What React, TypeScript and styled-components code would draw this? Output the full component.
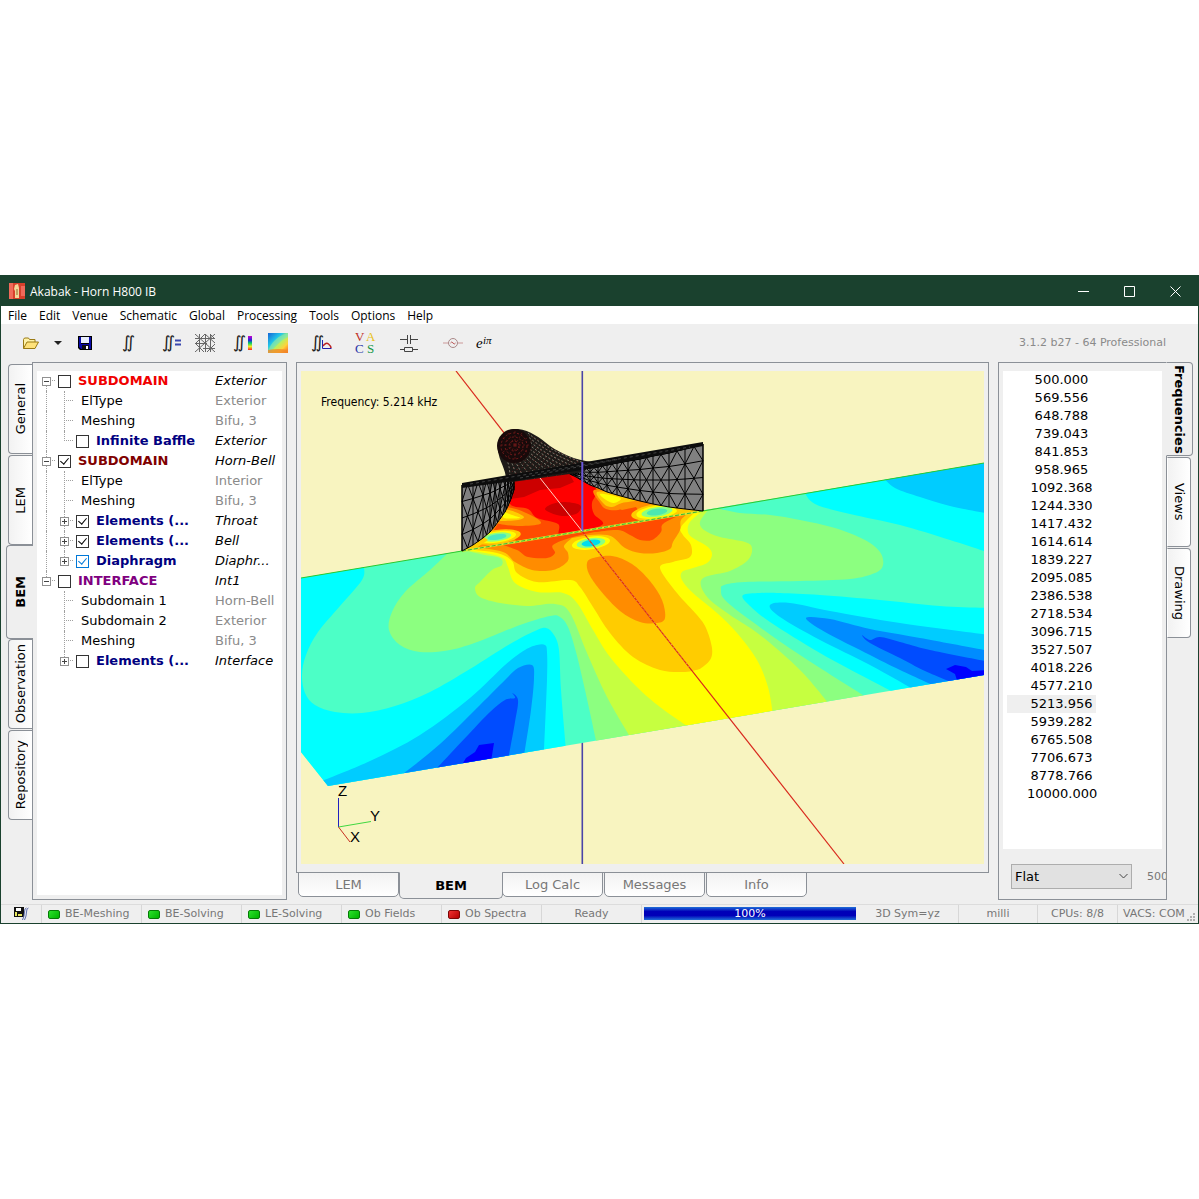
import React, { useState } from "react";
import styled, { createGlobalStyle, css } from "styled-components";

const verdana = `Verdana, "DejaVu Sans", sans-serif`;
const segoe = `"Segoe UI", "Open Sans", "Noto Sans", sans-serif`;
const line = "#8b9097";
const face = "#efefef";

const GlobalStyle = createGlobalStyle`
  *, *::before, *::after { box-sizing: border-box; }
  body { margin: 0; background: #fff; font-family: ${verdana}; font-size: 13px; color: #000; }
  button, select, input { font: inherit; color: inherit; margin: 0; }
  ul { list-style: none; margin: 0; padding: 0; }
`;

const Page = styled.div`
  min-height: 100vh;
  display: flex;
  flex-direction: column;
  justify-content: center;
`;

const Window = styled.main`
  display: flex;
  flex-direction: column;
  border: 1px solid #1a412e;
  background: ${face};
`;

const TitleBar = styled.header`
  display: flex;
  align-items: center;
  height: 30px;
  padding-left: 8px;
  background: #1a412e;
  color: #fff;
  font-family: ${segoe};
`;

const Title = styled.h1`
  margin: 0 auto 0 5px;
  font-size: 12px;
  font-weight: 400;
`;

const CaptionButton = styled.button`
  display: grid;
  place-items: center;
  width: 46px;
  height: 30px;
  padding: 0;
  border: 0;
  background: none;
`;

const MenuBar = styled.nav`
  display: flex;
  height: 18px;
  padding-left: 1px;
  background: #fff;
`;

const MenuItem = styled.button`
  padding: 0 6px;
  border: 0;
  background: none;
  font-family: ${segoe};
  font-size: 12px;
  line-height: 20px;
`;

const ToolBar = styled.div`
  display: flex;
  align-items: center;
  height: 38px;
  padding: 0 32px 1px 18px;
`;

const ToolButton = styled.button<{ $w?: number; $after?: number }>`
  display: grid;
  place-items: center;
  width: ${(p) => p.$w ?? 32}px;
  height: 28px;
  margin-right: ${(p) => p.$after ?? 0}px;
  padding: 0;
  border: 0;
  background: none;
`;

const Version = styled.span`
  margin-left: auto;
  color: #8a8a8a;
  font-size: 11px;
`;

const Workspace = styled.div`
  display: grid;
  grid-template-columns: 25px 255px minmax(0, 1fr) 169px 25px;
  padding: 0 6px 4px 6px;
`;

const SideTabs = styled.div<{ $right?: boolean }>`
  display: flex;
  flex-direction: column;
  gap: 1px;
  padding-top: ${(p) => (p.$right ? 0 : 2)}px;
  ${(p) => !p.$right && css`align-items: flex-end;`}
`;

const SideTab = styled.button<{ $right?: boolean; $active?: boolean }>`
  position: relative;
  z-index: 1;
  display: grid;
  place-items: center;
  width: 24px;
  height: ${(p) => (p.$active ? 94 : 90)}px;
  padding: 0;
  border: 1px solid ${line};
  background: linear-gradient(to right, #f2f2f2, #fff);
  span {
    writing-mode: vertical-rl;
    white-space: nowrap;
  }
  ${(p) =>
    p.$right
      ? css`
          border-left-color: transparent;
          border-radius: 0 4px 4px 0;
        `
      : css`
          border-right: 0;
          border-radius: 4px 0 0 4px;
          span { transform: rotate(180deg); }
        `}
  ${(p) =>
    p.$active &&
    css`
      width: 27px;
      margin: ${p.$right ? "0 0 0 -1px" : "-1px -1px -1px 0"};
      background: ${face};
      font-weight: 700;
    `}
`;

const Panel = styled.section`
  display: flex;
  flex-direction: column;
  border: 1px solid ${line};
  background: ${face};
`;

const Sheet = styled.div`
  flex: 1;
  margin: 8px 4px 4px;
  background: #fff;
`;

const TreeRow = styled.li`
  display: grid;
  grid-template-columns: 178px minmax(0, 1fr);
  height: 20px;
  line-height: 20px;
`;

const TreeName = styled.div`
  display: flex;
  align-items: center;
`;

const Guide = styled.span<{ $up?: boolean; $down?: boolean; $stub?: boolean }>`
  position: relative;
  flex: none;
  display: grid;
  place-items: center;
  width: 18px;
  height: 20px;
  &::before {
    content: "";
    position: absolute;
    left: 9px;
    top: ${(p) => (p.$up ? 0 : 10)}px;
    bottom: ${(p) => (p.$down ? 0 : 10)}px;
    border-left: 1px dotted #a0a0a0;
  }
  &::after {
    content: "";
    position: absolute;
    left: 9px;
    right: 0;
    top: 9px;
    border-top: ${(p) => (p.$stub ? "1px dotted #a0a0a0" : 0)};
  }
`;

const Expander = styled.button`
  position: relative;
  z-index: 1;
  display: block;
  width: 9px;
  height: 9px;
  padding: 0;
  border: 1px solid #919191;
  background: #fff;
  svg { display: block; }
`;

const Check = styled.input`
  appearance: none;
  flex: none;
  position: relative;
  width: 13px;
  height: 13px;
  margin: 0 7px 0 3px;
  border: 1px solid #333;
  background: #fff;
  &[data-hot="true"] { border-color: #0078d7; color: #0078d7; }
  &:checked::after {
    content: "";
    position: absolute;
    left: 3px;
    top: 0;
    width: 5px;
    height: 8px;
    border: solid currentColor;
    border-width: 0 1px 1px 0;
    transform: rotate(40deg);
  }
`;

const NodeLabel = styled.label<{ $color?: string }>`
  color: ${(p) => p.$color ?? "#000"};
  font-weight: 700;
  white-space: nowrap;
`;

const NodeText = styled.span`
  padding-left: 8px;
`;

const TreeValue = styled.span<{ $dim?: boolean }>`
  overflow: hidden;
  white-space: nowrap;
  text-overflow: ellipsis;
  color: ${(p) => (p.$dim ? "#8a8a8a" : "#000")};
  font-style: ${(p) => (p.$dim ? "normal" : "italic")};
`;

const Center = styled.div`
  display: flex;
  flex-direction: column;
  margin: 0 9px 1px;
`;

const View = styled(Panel)`
  padding: 8px 4px;
  svg { display: block; width: 100%; height: auto; }
`;

const BottomTabs = styled.div`
  display: flex;
  align-items: flex-start;
  gap: 1px;
  padding-left: 2px;
`;

const BottomTab = styled.button<{ $active?: boolean }>`
  position: relative;
  z-index: 1;
  width: 101px;
  height: 25px;
  margin-top: -1px;
  padding: 0 0 1px;
  border: 1px solid ${line};
  border-radius: 0 0 5px 5px;
  background: linear-gradient(#f2f2f2, #fff);
  color: #777;
  ${(p) =>
    p.$active &&
    css`
      width: 104px;
      height: 27px;
      margin-left: -1px;
      margin-right: -2px;
      border-top-color: ${face};
      background: ${face};
      color: #000;
      font-weight: 700;
    `}
`;

const FreqItem = styled.li`
  width: 89px;
  height: 18px;
  margin-left: 4px;
  padding-left: 20px;
  line-height: 18px;
  text-align: center;
  white-space: nowrap;
  cursor: default;
  &[aria-selected="true"] { background: ${face}; }
`;

const PanelFooter = styled.div`
  display: flex;
  align-items: center;
  gap: 15px;
  height: 46px;
  padding-left: 12px;
  overflow: hidden;
  color: #777;
  font-size: 11px;
`;

const SelectBox = styled.div`
  position: relative;
  flex: none;
  width: 121px;
  svg {
    position: absolute;
    right: 4px;
    top: 9px;
    pointer-events: none;
  }
`;

const Select = styled.select`
  appearance: none;
  width: 100%;
  height: 25px;
  padding: 0 3px;
  border: 1px solid #adadad;
  border-radius: 0;
  background: #e1e1e1;
  color: #000;
  font-size: 13px;
`;

const StatusBar = styled.footer`
  display: flex;
  height: 19px;
  border-top: 1px solid #dcdcdc;
  color: #777;
  font-size: 11px;
  line-height: 18px;
  overflow: hidden;
`;

const StatusCell = styled.div<{ $w: number; $start?: boolean }>`
  flex: none;
  display: flex;
  align-items: center;
  justify-content: ${(p) => (p.$start ? "flex-start" : "center")};
  gap: 5px;
  width: ${(p) => p.$w}px;
  padding-left: ${(p) => (p.$start ? 6 : 0)}px;
  border-right: 1px solid #d7d7d7;
  white-space: nowrap;
`;

const Lamp = styled.i<{ $on: boolean }>`
  width: 12px;
  height: 9px;
  border: 1px solid ${(p) => (p.$on ? "#067a06" : "#7a0606")};
  border-radius: 2px;
  background: ${(p) =>
    p.$on ? "linear-gradient(135deg, #2be02b, #00b400)" : "linear-gradient(135deg, #f03030, #b40000)"};
`;

const Progress = styled.div`
  flex: 1;
  height: 13px;
  margin: 2px 1px 0 2px;
  background: linear-gradient(#1f6fd8, #0000b8 35%, #0000b8 65%, #1f6fd8);
  color: #fff;
  line-height: 13px;
  text-align: center;
`;

const LastCell = styled.div`
  flex: none;
  display: flex;
  width: 80px;
  padding-left: 5px;
  white-space: nowrap;
  svg { margin: 8px 3px 0 auto; }
`;

/* ---------- Toolbar drawings ---------- */

const Integrals = ({ x = 2 }: { x?: number }) => (
  <text x={x} y="16" fontFamily="DejaVu Sans, sans-serif" fontSize="17" fill="#222">∬</text>
);

const FolderIcon = () => (
  <svg width="18" height="14" viewBox="0 0 18 14">
    <path d="M1.5 12.5V3.5l1-1.5h4l1 1.500h5.500v2.500" fill="#fff3a8" stroke="#9a7a14" />
    <path d="M1.500 12.500 5 6h11.500L13 12.500z" fill="#ffe27a" stroke="#9a7a14" />
  </svg>
);

const SaveIcon = () => (
  <svg width="14" height="14" viewBox="0 0 14 14">
    <path d="M0 0h14v14H2l-2-2z" fill="#000" />
    <path d="M1 1h2v7h8V1h2v12H3l-2-2z" fill="#0a0aa8" />
    <path d="M3 1h8v6H3z" fill="#e8eefc" />
    <path d="M4 9h7v4H4z" fill="#111" />
    <path d="M8 10h2v3H8z" fill="#fff" />
  </svg>
);

const MeshIcon = () => (
  <svg width="20" height="18" viewBox="0 0 20 18" fill="none" stroke="#666">
    <path d="M0 4.500h20M0 9.500h12M8 14.500h12M4.500 0v18M10.500 0v18M15.500 0v18M0 0l20 18M20 0 0 18M0 10l10-10 10 9M0 9l9 9M12 18l8-8M15 0l5 5" />
  </svg>
);

const FieldIcon = () => (
  <svg width="20" height="20" viewBox="0 0 20 20">
    <defs>
      <linearGradient id="fi" x1="0" y1="0" x2="1" y2="1">
        <stop offset="0" stopColor="#1565d8" />
        <stop offset=".35" stopColor="#22c8e8" />
        <stop offset=".55" stopColor="#b8f060" />
        <stop offset=".75" stopColor="#ffd23a" />
        <stop offset="1" stopColor="#ff5a1e" />
      </linearGradient>
    </defs>
    <path d="M0 0h20v20H0z" fill="url(#fi)" />
    <path d="M0 20C2 10 9 3 20 0V4C12 8 5 14 3 20z" fill="#7fe6b0" opacity=".7" />
    <path d="M0 17q10-2 20 0v3H0z" fill="#f08a28" opacity=".8" />
  </svg>
);

const SourceIcon = () => (
  <svg width="20" height="12" viewBox="0 0 20 12" fill="none" stroke="#c99">
    <path d="M0 6h5M15 6h5" />
    <circle cx="10" cy="6" r="4.500" stroke="#a88" />
    <path d="M7.500 6q1.200-2 2.500 0t2.500 0" stroke="#b55" />
  </svg>
);

const CapIcon = () => (
  <svg width="18" height="18" viewBox="0 0 18 18" fill="none" stroke="#444">
    <path d="M0 5.500h7M11 5.500h7M7.500 1v9M10.500 1v9M0 15.500h4M13 15.500h5M4.500 13.500h8v4h-8z" />
  </svg>
);

/* ---------- Tree ---------- */

type Node = {
  name: string;
  value: string;
  root?: boolean;
  check?: boolean;
  checked?: boolean;
  expand?: "+" | "-";
  color?: string;
  last?: boolean;
  hot?: boolean;
  tail?: boolean;
};

const navy = "#000080";
const nodes: Node[] = [
  { name: "SUBDOMAIN", value: "Exterior", root: true, check: true, expand: "-", color: "#f00000" },
  { name: "ElType", value: "Exterior" },
  { name: "Meshing", value: "Bifu, 3" },
  { name: "Infinite Baffle", value: "Exterior", check: true, color: navy, last: true },
  { name: "SUBDOMAIN", value: "Horn-Bell", root: true, check: true, checked: true, expand: "-", color: "#800000" },
  { name: "ElType", value: "Interior" },
  { name: "Meshing", value: "Bifu, 3" },
  { name: "Elements (...", value: "Throat", check: true, checked: true, expand: "+", color: navy },
  { name: "Elements (...", value: "Bell", check: true, checked: true, expand: "+", color: navy },
  { name: "Diaphragm", value: "Diaphr...", check: true, checked: true, expand: "+", color: navy, last: true, hot: true },
  { name: "INTERFACE", value: "Int1", root: true, check: true, expand: "-", color: "#800080", tail: true },
  { name: "Subdomain 1", value: "Horn-Bell", tail: true },
  { name: "Subdomain 2", value: "Exterior", tail: true },
  { name: "Meshing", value: "Bifu, 3", tail: true },
  { name: "Elements (...", value: "Interface", check: true, expand: "+", color: navy, last: true, tail: true },
];

const ExpanderBox = ({ sign, name }: { sign: "+" | "-"; name: string }) => (
  <Expander type="button" aria-label={(sign === "+" ? "Expand " : "Collapse ") + name}>
    <svg width="7" height="7" viewBox="0 0 7 7" stroke="#444">
      <path d={sign === "+" ? "M1 3.500h5M3.500 1v5" : "M1 3.500h5"} />
    </svg>
  </Expander>
);

const Indent = styled.span`
  flex: none;
  width: 18px;
`;

const TreeItem = ({ node, id, first }: { node: Node; id: string; first: boolean }) => (
  <TreeRow>
    <TreeName>
      {node.root ? (
        <Guide $up={!first} $down={!node.tail} $stub>
          <ExpanderBox sign={node.expand!} name={node.name} />
        </Guide>
      ) : (
        <>
          {node.tail ? <Indent /> : <Guide $up $down />}
          <Guide $up $down={!node.last} $stub>
            {node.expand && <ExpanderBox sign={node.expand} name={node.name} />}
          </Guide>
        </>
      )}
      {node.check ? (
        <>
          <Check type="checkbox" id={id} defaultChecked={node.checked} data-hot={!!node.hot} />
          <NodeLabel htmlFor={id} $color={node.color}>{node.name}</NodeLabel>
        </>
      ) : (
        <NodeText>{node.name}</NodeText>
      )}
    </TreeName>
    <TreeValue $dim={!node.check}>{node.value}</TreeValue>
  </TreeRow>
);

/* ---------- Sound field ---------- */

type Pt = [number, number];

/* Smooth curve through the points; the flat ends are kept outside of the clip. */
const smooth = (pts: Pt[], closed = false) => {
  const n = pts.length;
  const at = (i: number) => (closed ? pts[(i + n) % n] : pts[Math.max(0, Math.min(n - 1, i))]);
  let d = `M${pts[0][0]} ${pts[0][1]}`;
  for (let i = 0; i < (closed ? n : n - 1); i++) {
    const [a, b, c, e] = [at(i - 1), at(i), at(i + 1), at(i + 2)];
    d += `C${b[0] + (c[0] - a[0]) / 6} ${b[1] + (c[1] - a[1]) / 6} ${c[0] - (e[0] - b[0]) / 6} ${c[1] - (e[1] - b[1]) / 6} ${c[0]} ${c[1]}`;
  }
  return d;
};

const parse = (s: string): Pt[] => s.trim().split(/\s+/).map((p) => p.split(",").map(Number) as Pt);

/* Each band: colour, contour points, straight closing path. */
const bands: [string, string, string][] = [
  ["#00ffff", "364,567 362,580 340,606 318,632 306,655 302,675 305,693 315,705 335,712 362,713 395,706 430,692 470,669 510,644 535,631 546,628 554,635 559,650 561,690 566,750", "L566 800L290 800L290 560Z"],
  ["#00ccff", "322,781 370,761 420,735 470,698 505,665 525,650 537,645 545,645 547,652 547,680 544,752", "L544 800L328 800Z"],
  ["#008cff", "403,774 440,744 480,705 505,680 518,668 532,665 534,678 531,710 524,756", "L524 800L400 800Z"],
  ["#004cff", "436,769 468,735 490,712 505,700 515,698 512,693 518,700 515,722 508,760", "L508 800L430 800Z"],
  ["#00ffff", "803,490 815,504 850,514 900,525 950,540 990,553", "L990 440L803 440Z"],
  ["#00ccff", "882,476 895,488 920,497 950,506 990,514", "L990 440Z"],
  ["#00ffff", "990,608 940,606 880,600 820,595 780,593 760,593 743,595 748,604 770,622 820,653 870,680 905,698", "L990 700Z"],
  ["#00ccff", "990,635 900,623 830,611 790,603 770,605 780,617 820,640 870,665 920,693", "L990 700Z"],
  ["#008cff", "990,651 920,638 870,629 830,619 806,618 825,632 870,655 900,670 948,692", "L990 700Z"],
  ["#004cff", "990,662 930,650 900,642 880,637 870,640 862,635 870,643 900,658 925,671 965,688", "L990 700Z"],
  ["#8cff80", "449,552 430,570 405,592 392,612 389,630 400,645 420,652 450,650 480,641 520,625 550,616 560,617 568,627 576,652 585,690 597,745", "L600 800L880 800L866 697"],
];

const greenRight = "866,697 800,655 750,620 725,600 721,590 724,585 745,582 800,581 850,579 875,573 883,565 880,552 865,540 835,528 800,520 770,515 740,513 716,508";

const nested: [string, string, string][] = [
  ["#c6ff40",
    "462,550 485,555 500,558 502,565 492,570 480,582 475,588 480,597 500,603 527,606 555,604 570,613 587,653 607,697 632,740",
    "830,705 800,670 760,635 730,615 710,600 701,586 705,577 730,571 748,560 752,548 745,542 720,537 704,530 700,522 708,510"],
  ["#ffff00",
    "462,550 485,553 503,558 508,567 515,583 537,592 563,593 577,603 593,630 610,657 637,687 660,707 690,728",
    "773,715 768,687 757,660 737,633 717,613 693,593 682,580 682,572 693,568 707,563 712,555 708,547 693,538 688,532 690,522 704,510"],
  ["#ffcc00",
    "464,549 497,553 512,561 517,573 537,582 570,580 580,587 593,607 610,633 633,657 660,670 685,672 700,669",
    "700,669 710,660 712,648 706,628 697,615 677,593 660,568 673,562 690,557 691,545 683,535 681,527 696,511"],
  ["#ff8c00",
    "474,547 503,552 515,562 532,570 553,570 567,562 568,553 564,546 572,538",
    "572,538 595,535 612,537 625,548 640,553 657,553 670,549 673,542 680,530 681,520 690,512"],
  ["#ff4c00",
    "500,544 517,550 528,557 547,558 555,553 553,545 573,537 595,532",
    "595,532 618,530 630,535 640,540 652,540 661,532 663,524 680,515"],
];

const hornFloor = "M462 551L470 500L513 476L566 470L703 480V511Z";

const floorSpots: [string, string][] = [
  ["#ff8c00", "500,508 516,509 536,518 540,524 520,526 500,524 492,520"],
  ["#ffcc00", "503,510 515,512 524,517 518,520 502,521 494,520"],
  ["#ffff00", "503,512 512,515 520,518 504,518"],
  ["#ff8c00", "594,490 620,492 652,502 650,507 630,505 618,510 606,509 600,503"],
  ["#ffcc00", "597,492 620,494 636,500 622,503 612,507 604,504"],
  ["#ffff00", "600,494 614,496 621,499 614,503 606,500"],
];

const Spot = ({ x, y, rx, ry, colors }: { x: number; y: number; rx: number; ry: number; colors: string[] }) => (
  <g transform={`rotate(-8 ${x} ${y})`}>
    {colors.map((c, i) => {
      const k = 1 - i / (colors.length + 1);
      return <ellipse key={c} cx={x} cy={y} rx={rx * k} ry={ry * k} fill={c} />;
    })}
  </g>
);

/* Triangulated wall between a top and a bottom edge. */
const wallMesh = (cols: [number, number, number][], rows: number) => {
  let d = "";
  const y = (c: [number, number, number], r: number) => c[1] + ((c[2] - c[1]) * r) / rows;
  cols.forEach((c, i) => {
    d += `M${c[0]} ${c[1]}V${c[2]}`;
    const n = cols[i + 1];
    if (!n) return;
    for (let r = 0; r < rows; r++) {
      const m: [number, number, number] = [(c[0] + n[0]) / 2, (c[1] + n[1]) / 2, (c[2] + n[2]) / 2];
      d += `M${c[0]} ${y(c, r)}L${n[0]} ${y(n, r)}`;
      d += r % 2
        ? `M${c[0]} ${y(c, r)}L${m[0]} ${y(m, r + 1)}L${n[0]} ${y(n, r)}`
        : `M${c[0]} ${y(c, r + 1)}L${m[0]} ${y(m, r)}L${n[0]} ${y(n, r + 1)}`;
    }
  });
  return d;
};

const rightWall: [number, number, number][] = [
  [703, 444, 511], [685, 449, 509], [669, 453, 507], [653, 456, 504], [640, 459, 501], [628, 461, 498],
  [617, 463, 495], [607, 465, 492], [598, 467, 488], [590, 468, 485], [583, 469, 481], [576, 470, 477], [568, 471, 473],
];
const leftWall: [number, number, number][] = [
  [462, 485, 551], [473, 483, 545], [483, 481, 538], [490, 480, 532], [495, 479, 526], [500, 478, 519],
  [505, 477, 512], [508, 477, 506], [511, 476, 499], [514, 476, 490],
];
const outline = (cols: [number, number, number][]) =>
  "M" + cols.map((c) => `${c[0]} ${c[1]}`).join("L") + "L" + [...cols].reverse().map((c) => `${c[0]} ${c[2]}`).join("L") + "Z";

const neck = "M498 450C497 434 508 428 518 429C530 430 540 438 550 446C562 454 575 460 592 462L584 472L512 482L506 482C507 470 499 462 498 450Z";

const neckRibs = Array.from({ length: 13 }, (_, i) => {
  const t = i / 12;
  return `M${528 - 22 * t} ${433 + 26 * t}Q${550 - 40 * t} ${452 + 12 * t} ${590 - 80 * t} ${465 + 15 * t}`;
}).join("");
const neckRings = Array.from({ length: 14 }, (_, i) => {
  const x = 530 + i * 4;
  return `M${x} ${435 + i * 2.2}Q${x - 14} ${456 + i} ${x - 20} 480`;
}).join("");
const throatWeb = Array.from({ length: 12 }, (_, i) => {
  const a = (i * Math.PI) / 6;
  return `M515 445L${515 + 16 * Math.cos(a)} ${445 + 16 * Math.sin(a)}`;
}).join("");

const SoundField = () => (
  <svg viewBox="301 371 683 493" role="img" aria-label="Sound field of the horn">
    <defs>
      <clipPath id="plane"><path d="M301 578L984 463V675L328 786L301 752Z" /></clipPath>
      <clipPath id="floor"><path d={hornFloor} /></clipPath>
      <clipPath id="neckClip"><path d={neck} /></clipPath>
    </defs>
    <path d="M301 371h683v493H301z" fill="#f8f4c0" />
    <path d="M456 371L515 447" stroke="#d8281c" strokeWidth="1.200" />
    <path d="M582.300 371V864" stroke="#4a44a8" strokeWidth="1.600" />

    <g clipPath="url(#plane)">
      <path d="M301 460h683v330H301z" fill="#4cffc6" />
      {bands.slice(0, 10).map(([c, p, end], i) => <path key={i} d={smooth(parse(p)) + end} fill={c} />)}
      <path d="M460 768L466 758L475 752L479 745L494 743L490 768Z" fill="#0000ff" />
      <path d="M946 669L955 665L966 667L972 671L990 670V690H960L955 674Z" fill="#0000ff" />
      <path d={smooth(parse(bands[10][1])) + bands[10][2] + smooth(parse(greenRight)).replace("M", "L") + "Z"} fill={bands[10][0]} />
      {nested.map(([c, a, b]) => (
        <path key={c} d={smooth(parse(a)) + smooth(parse(b)).replace("M", "L") + "Z"} fill={c} />
      ))}
      <path
        d={smooth(parse("587,563 593,558 612,556 632,564 650,581 662,600 665,618 657,623 640,622 620,611 600,590 589,574"), true)}
        fill="#ff8c00"
      />
      <Spot x={591} y={543} rx={24} ry={8} colors={["#ffcc00", "#ffff00", "#8cff80", "#00ddee"]} />
    </g>

    <g clipPath="url(#floor)">
      <path d="M460 470h245v85H460z" fill="#ff8c00" />
      <path d="M500 520L512 500L560 478L600 490L604 503L622 510L636 507L640 513L660 520L590 535L520 545L512 536L494 530Z" fill="#ff4c00" />
      <path d={smooth(parse("508,482 565,468 583,480 597,490 592,503 594,514 603,524 583,531 560,535 558,524 537,518 528,509 510,504"), true)} fill="#ff0000" />
      <path d="M510 478L566 468L574 482L560 488L540 490L524 497L510 499Z" fill="#cc0000" />
      <path d={smooth(parse("545,509 552,504 564,502 578,504 581,508 576,514 562,516 551,513"), true)} fill="#cc0000" />
      {floorSpots.map(([c, p], i) => <path key={i} d={smooth(parse(p), true)} fill={c} />)}
      <Spot x={497} y={537} rx={24} ry={7} colors={["#ffcc00", "#ffff00", "#8cff80", "#4ce8c0"]} />
      <Spot x={657} y={512} rx={26} ry={8} colors={["#ffcc00", "#ffff00", "#8cff80", "#4ce8b0"]} />
      <path d="M462 551L482 536L488 540L475 549ZM675 508L703 511L680 515Z" fill="#ffcc00" />
    </g>

    <path d="M301 578L462 551M703 511L984 463" stroke="#2ec82e" />
    <path d="M462 551L703 511" stroke="#d8e830" strokeWidth="2" />
    <path d="M462 551L703 511" stroke="#38b838" strokeDasharray="4 2" />

    <path d={outline(leftWall)} fill="#808080" stroke="#000" />
    <path d={outline(rightWall)} fill="#808080" stroke="#000" />
    <path d={wallMesh(rightWall, 4)} fill="none" stroke="#000" />
    <path d={wallMesh(leftWall, 4)} fill="none" stroke="#000" />

    <path d={neck} fill="#1d1a17" />
    <g clipPath="url(#neckClip)" fill="none">
      <path d={neckRibs} stroke="#b9b3a0" strokeWidth=".7" strokeDasharray="2 2" />
      <path d={neckRings} stroke="#8a3030" strokeWidth=".7" strokeDasharray="1 3" />
    </g>
    <circle cx="514" cy="446" r="17" fill="#180a0a" />
    <path d={throatWeb} stroke="#6a1818" strokeWidth=".7" strokeDasharray="2 2" />
    <g fill="none" stroke="#8a2020" strokeWidth=".8" strokeDasharray="2 2">
      <circle cx="514" cy="446" r="13" />
      <circle cx="514" cy="446" r="9" />
      <circle cx="514" cy="446" r="5" />
    </g>
    <path d="M462 483L703 442V446L600 467L514 481L462 488Z" fill="#0d0d0d" />
    <path d="M470 484L690 447M520 478L620 459" stroke="#666" strokeWidth=".6" strokeDasharray="3 3" />

    <path d="M582.300 462V531" stroke="#6a58d8" strokeWidth="2" />
    <path d="M540 478L582 531" stroke="#ffd0c0" />
    <path d="M582 531L844 864" stroke="#d8281c" strokeWidth="1.200" />
    <path d="M582 531L690 668" stroke="#e8a070" strokeDasharray="1 3" />
    <path d="M338.500 827V798" stroke="#2020c0" />
    <path d="M338.500 827L371 821.500" stroke="#40d840" />
    <path d="M338.500 827L350 842" stroke="#c83020" />
    <g fontFamily="'Liberation Sans', Arial, sans-serif" fontSize="15" fill="#000">
      <text x="338" y="796">Z</text>
      <text x="370" y="821">Y</text>
      <text x="350" y="842">X</text>
    </g>
    <text x="321" y="406" fontFamily="Tahoma, 'DejaVu Sans Condensed', 'Open Sans', sans-serif" fontSize="12" fill="#000">
      Frequency: 5.214 kHz
    </text>
  </svg>
);

/* ---------- Data ---------- */

const menus = ["File", "Edit", "Venue", "Schematic", "Global", "Processing", "Tools", "Options", "Help"];
const frequencies = [
  "500.000", "569.556", "648.788", "739.043", "841.853", "958.965", "1092.368", "1244.330", "1417.432",
  "1614.614", "1839.227", "2095.085", "2386.538", "2718.534", "3096.715", "3527.507", "4018.226", "4577.210",
  "5213.956", "5939.282", "6765.508", "7706.673", "8778.766", "10000.000",
];
const lamps: [string, boolean][] = [
  ["BE-Meshing", true], ["BE-Solving", true], ["LE-Solving", true], ["Ob Fields", true], ["Ob Spectra", false],
];

export default function App() {
  const [freq, setFreq] = useState("5213.956");
  return (
    <Page>
      <GlobalStyle />
      <Window>
        <TitleBar>
          <svg width="16" height="16" viewBox="0 0 16 16">
            <path d="M0 0h16v16H0z" fill="#d8402c" />
            <path d="M0 0h4v16H0zM12 3h4v10h-4z" fill="#f06a5a" />
            <path d="M6 2l3-1 1 4v10H6V8L5 6z" fill="#f3d69a" />
            <path d="M7 6h2v6H7z" fill="#c0a060" />
          </svg>
          <Title>Akabak - Horn H800 IB</Title>
          <CaptionButton type="button" aria-label="Minimize">
            <svg width="11" height="11" viewBox="0 0 11 11" stroke="#fff"><path d="M0 5.500h11" /></svg>
          </CaptionButton>
          <CaptionButton type="button" aria-label="Maximize">
            <svg width="11" height="11" viewBox="0 0 11 11" stroke="#fff" fill="none"><path d="M.5.500h10v10H.500z" /></svg>
          </CaptionButton>
          <CaptionButton type="button" aria-label="Close">
            <svg width="11" height="11" viewBox="0 0 11 11" stroke="#fff"><path d="M.500.500l10 10M10.500.500l-10 10" /></svg>
          </CaptionButton>
        </TitleBar>
        <MenuBar>
          {menus.map((m) => <MenuItem key={m} type="button">{m}</MenuItem>)}
        </MenuBar>
        <ToolBar>
          <ToolButton type="button" $w={24} aria-label="Open"><FolderIcon /></ToolButton>
          <ToolButton type="button" $w={30} aria-label="Recent files">
            <svg width="8" height="4" viewBox="0 0 8 4"><path d="M0 0h8L4 4z" fill="#222" /></svg>
          </ToolButton>
          <ToolButton type="button" $w={24} $after={16} aria-label="Save"><SaveIcon /></ToolButton>
          <ToolButton type="button" $after={11} aria-label="Integrate">
            <svg width="18" height="22" viewBox="0 0 18 22"><Integrals x={2} /></svg>
          </ToolButton>
          <ToolButton type="button" aria-label="Solve">
            <svg width="22" height="22" viewBox="0 0 22 22">
              <Integrals x={1} />
              <path d="M14 8.500h6M14 12.500h6" stroke="#3a48b0" strokeWidth="2" />
            </svg>
          </ToolButton>
          <ToolButton type="button" $w={34} $after={6} aria-label="Mesh"><MeshIcon /></ToolButton>
          <ToolButton type="button" aria-label="Field integration">
            <svg width="22" height="22" viewBox="0 0 22 22">
              <defs>
                <linearGradient id="bar" x1="0" y1="0" x2="0" y2="1">
                  <stop offset="0" stopColor="#c0c" />
                  <stop offset=".3" stopColor="#22d" />
                  <stop offset=".5" stopColor="#0c6" />
                  <stop offset=".75" stopColor="#ee2" />
                  <stop offset="1" stopColor="#f22" />
                </linearGradient>
              </defs>
              <Integrals x={0} />
              <path d="M15 4h4v14h-4z" fill="url(#bar)" />
            </svg>
          </ToolButton>
          <ToolButton type="button" $w={36} $after={10} aria-label="Field"><FieldIcon /></ToolButton>
          <ToolButton type="button" $after={11} aria-label="Spectra">
            <svg width="22" height="22" viewBox="0 0 22 22" fill="none">
              <Integrals x={0} />
              <path d="M11.500 8v8.500h9" stroke="#22a" />
              <path d="M12 14q3-4 5.500-2t2.500 4" stroke="#b22" strokeWidth="1.500" />
            </svg>
          </ToolButton>
          <ToolButton type="button" $after={12} aria-label="VACS">
            <svg width="24" height="28" viewBox="0 0 24 28" fontFamily="'Liberation Serif', serif" fontSize="13">
              <text x="2" y="12" fill="#c03028">V</text>
              <text x="13" y="12" fill="#e8c020">A</text>
              <text x="2" y="24" fill="#2838a8">C</text>
              <text x="14" y="24" fill="#189848">S</text>
            </svg>
          </ToolButton>
          <ToolButton type="button" $after={12} aria-label="Network"><CapIcon /></ToolButton>
          <ToolButton type="button" aria-label="Source"><SourceIcon /></ToolButton>
          <ToolButton type="button" aria-label="Formula">
            <svg width="22" height="18" viewBox="0 0 22 18" fontFamily="'Liberation Serif', serif" fontStyle="italic">
              <text x="2" y="14" fontSize="15">e</text>
              <text x="9" y="10" fontSize="11">iπ</text>
            </svg>
          </ToolButton>
          <Version>3.1.2 b27 - 64 Professional</Version>
        </ToolBar>

        <Workspace>
          <SideTabs role="tablist" aria-label="Project">
            {["General", "LEM", "BEM", "Observation", "Repository"].map((t) => (
              <SideTab key={t} type="button" role="tab" aria-selected={t === "BEM"} $active={t === "BEM"}>
                <span>{t}</span>
              </SideTab>
            ))}
          </SideTabs>

          <Panel>
            <Sheet>
              <ul>
                {nodes.map((n, i) => <TreeItem key={i} node={n} id={`node-${i}`} first={i === 0} />)}
              </ul>
            </Sheet>
          </Panel>

          <Center>
            <View>
              <SoundField />
            </View>
            <BottomTabs role="tablist" aria-label="View">
              {["LEM", "BEM", "Log Calc", "Messages", "Info"].map((t) => (
                <BottomTab key={t} type="button" role="tab" aria-selected={t === "BEM"} $active={t === "BEM"}>
                  {t}
                </BottomTab>
              ))}
            </BottomTabs>
          </Center>

          <Panel>
            <Sheet>
              <ul role="listbox" aria-label="Frequencies">
                {frequencies.map((f) => (
                  <FreqItem key={f} role="option" aria-selected={f === freq} onClick={() => setFreq(f)}>
                    {f}
                  </FreqItem>
                ))}
              </ul>
            </Sheet>
            <PanelFooter>
              <SelectBox>
                <Select aria-label="Weighting" defaultValue="Flat">
                  <option>Flat</option>
                </Select>
                <svg width="9" height="6" viewBox="0 0 9 6" fill="none" stroke="#444"><path d="M.500 1l4 4 4-4" /></svg>
              </SelectBox>
              <span>500</span>
            </PanelFooter>
          </Panel>

          <SideTabs $right role="tablist" aria-label="Settings">
            {["Frequencies", "Views", "Drawing"].map((t) => (
              <SideTab key={t} type="button" role="tab" aria-selected={t === "Frequencies"} $right $active={t === "Frequencies"}>
                <span>{t}</span>
              </SideTab>
            ))}
          </SideTabs>
        </Workspace>

        <StatusBar>
          <StatusCell $w={41}>
            <svg width="15" height="14" viewBox="0 0 15 14">
              <path d="M0 0h10v10H0z" fill="#111" />
              <path d="M2 1h5v3H2z" fill="#fff" />
              <path d="M1 5h2v4H1zM4 7h4v2H4z" fill="#e8e860" />
              <path d="M12.500 1q-2 0-2 4t-2 8M14.500 1q-2 0-2 4t-2 8" stroke="#6070b0" fill="none" />
            </svg>
          </StatusCell>
          {lamps.map(([t, on]) => (
            <StatusCell key={t} $w={100} $start><Lamp $on={on} />{t}</StatusCell>
          ))}
          <StatusCell $w={100}>Ready</StatusCell>
          <Progress role="progressbar" aria-label="Progress" aria-valuenow={100}>100%</Progress>
          <StatusCell $w={102}>3D Sym=yz</StatusCell>
          <StatusCell $w={79}>milli</StatusCell>
          <StatusCell $w={80}>CPUs: 8/8</StatusCell>
          <LastCell>
            VACS: COM
            <svg width="8" height="8" viewBox="0 0 8 8" fill="#b0b0b0">
              <path d="M6 0h2v2H6zM3 3h2v2H3zM6 3h2v2H6zM0 6h2v2H0zM3 6h2v2H3zM6 6h2v2H6z" />
            </svg>
          </LastCell>
        </StatusBar>
      </Window>
    </Page>
  );
}
